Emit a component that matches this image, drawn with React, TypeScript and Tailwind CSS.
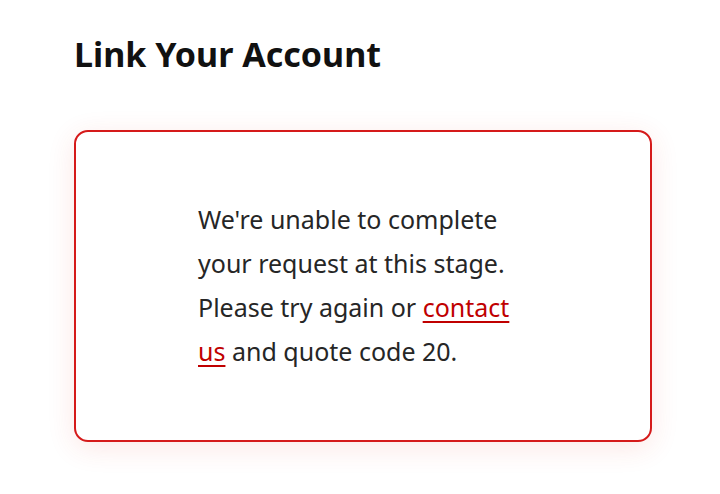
export default function App() {
  return (
    <div className="min-h-[494px] w-[720px] bg-white pl-[74px] pr-[68px] pt-[29px] font-['Noto_Sans',sans-serif]">
      <h1 className="text-[34px] font-bold leading-[50px] text-[#111]">Link Your Account</h1>
      <div className="mt-[51px] flex h-[312px] items-center justify-center rounded-[14px] border-2 border-[#d51a1a] bg-white shadow-[0_6px_28px_rgba(230,60,40,0.12)]">
        <p className="mb-[3px] w-[330px] text-[25px] leading-[44px] text-[#262626]">
          We're unable to complete your request at this stage. Please try again or{" "}
          <a href="#" className="text-[#c00000] underline underline-offset-4">
            contact us
          </a>{" "}
          and quote code 20.
        </p>
      </div>
    </div>
  );
}
